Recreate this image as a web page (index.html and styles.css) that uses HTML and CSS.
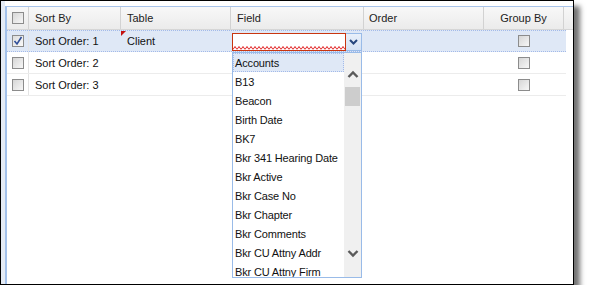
FILE: index.html
```html
<!DOCTYPE html>
<html lang="en">
<head>
    <meta charset="UTF-8">
    <title>Sort Order</title>
    <link rel="stylesheet" href="styles.css">
</head>
<body>
    <div class="frame">
        <div class="grid">
            <div class="head">
                <div class="cell c-check"><span class="checkbox"></span></div>
                <div class="cell c-sort">Sort By</div>
                <div class="cell c-table">Table</div>
                <div class="cell c-field">Field</div>
                <div class="cell c-order">Order</div>
                <div class="cell c-group">Group By</div>
            </div>

            <div class="row selected">
                <div class="cell c-check">
                    <span class="checkbox">
                        <svg width="10" height="10" viewBox="0 0 10 10"><polyline points="1.5,5 4,8 8.5,1" fill="none" stroke="#2f4f9a" stroke-width="1.6"/></svg>
                    </span>
                </div>
                <div class="cell c-sort">Sort Order: 1</div>
                <div class="cell c-table dirty">Client</div>
                <div class="cell c-field"></div>
                <div class="cell c-order"></div>
                <div class="cell c-group"><span class="checkbox"></span></div>
            </div>
            <div class="row">
                <div class="cell c-check"><span class="checkbox"></span></div>
                <div class="cell c-sort">Sort Order: 2</div>
                <div class="cell c-table"></div>
                <div class="cell c-field"></div>
                <div class="cell c-order"></div>
                <div class="cell c-group"><span class="checkbox"></span></div>
            </div>
            <div class="row">
                <div class="cell c-check"><span class="checkbox"></span></div>
                <div class="cell c-sort">Sort Order: 3</div>
                <div class="cell c-table"></div>
                <div class="cell c-field"></div>
                <div class="cell c-order"></div>
                <div class="cell c-group"><span class="checkbox"></span></div>
            </div>

            <!-- field combo editor over row 1 -->
            <div class="editor">
                <div class="editor-input">
                    <svg class="squiggle" width="112" height="4">
                        <defs>
                            <pattern id="zig" width="4" height="4" patternUnits="userSpaceOnUse">
                                <polyline points="0,3.5 2,0.5 4,3.5" fill="none" stroke="#e02020" stroke-width="1"/>
                            </pattern>
                        </defs>
                        <rect width="112" height="4" fill="url(#zig)"/>
                    </svg>
                </div>
                <div class="editor-trigger">
                    <svg width="9" height="6" viewBox="0 0 9 6"><polyline points="1,1 4.5,4.5 8,1" fill="none" stroke="#25467e" stroke-width="2"/></svg>
                </div>
            </div>

            <div class="dropdown">
                <div class="list">
                    <div class="item active">Accounts</div>
                    <div class="item">B13</div>
                    <div class="item">Beacon</div>
                    <div class="item">Birth Date</div>
                    <div class="item">BK7</div>
                    <div class="item">Bkr 341 Hearing Date</div>
                    <div class="item">Bkr Active</div>
                    <div class="item">Bkr Case No</div>
                    <div class="item">Bkr Chapter</div>
                    <div class="item">Bkr Comments</div>
                    <div class="item">Bkr CU Attny Addr</div>
                    <div class="item">Bkr CU Attny Firm</div>
                </div>
                <div class="scrollbar">
                    <div class="arrow">
                        <svg width="12" height="8" viewBox="0 0 12 8"><polyline points="1.5,7 6,2.5 10.5,7" fill="none" stroke="#5a5a5a" stroke-width="2.4"/></svg>
                    </div>
                    <div class="thumb"></div>
                    <div class="track"></div>
                    <div class="arrow">
                        <svg width="12" height="8" viewBox="0 0 12 8"><polyline points="1.5,1 6,5.5 10.5,1" fill="none" stroke="#5a5a5a" stroke-width="2.4"/></svg>
                    </div>
                </div>
            </div>
        </div>
    </div>
</body>
</html>
```

FILE: styles.css
```css
body {
    margin: 0;
    background: #fff;
    font-family: "Liberation Sans", Arial, sans-serif;
    font-size: 11px;
    color: #111;
}
.frame {
    width: 574px;
    height: 285px;
    box-sizing: border-box;
    border: 1px solid #000;
    padding: 5px 0 0 4px;
    display: flex;
    flex-direction: column;
    background: linear-gradient(to right, #e4ebf5 4px, #fff 4px);
    box-shadow: 6px 6px 5px rgba(0, 0, 0, 0.55);
}
.grid {
    flex: 1;
    position: relative;
    background: #fff;
    border-top: 1px solid #a8c4ea;
    border-left: 2px solid #a3c1ea;
}

/* header + rows */
.head {
    display: flex;
    height: 23px;
    box-sizing: border-box;
    border-bottom: 1px solid #d6d6d6;
    background: linear-gradient(#f8f8f8, #ebebeb);
}
.row {
    display: flex;
    width: 559px;
    height: 22px;
    box-sizing: border-box;
    border-bottom: 1px solid #ececec;
}
.row.selected {
    background: #dfe8f6;
    border-top: 1px dotted #a3bae9;
    border-bottom: 1px dotted #a3bae9;
}
.cell {
    display: flex;
    align-items: center;
    box-sizing: border-box;
    padding-left: 6px;
    white-space: nowrap;
    position: relative;
}
.head .cell {
    border-right: 1px solid #d2d2d2;
    color: #222;
}
.c-check { width: 22px; padding: 0; justify-content: center; border-right: 1px solid #e4e4e4; }
.c-sort { width: 92px; }
.c-table { width: 110px; }
.c-field { width: 133px; }
.c-order { width: 120px; padding-left: 5px; }
.c-group { width: 80px; padding: 0; justify-content: center; }

.checkbox {
    width: 12px;
    height: 12px;
    box-sizing: border-box;
    border: 1px solid #8c8c8c;
    background: linear-gradient(135deg, #d6d6d6, #f7f7f7);
    display: flex;
    align-items: center;
    justify-content: center;
}
.selected .c-check .checkbox {
    background: linear-gradient(135deg, #dcdcdc, #fafafa);
}
.dirty::before {
    content: "";
    position: absolute;
    left: 0;
    top: 0;
    border-top: 5px solid #c41010;
    border-right: 5px solid transparent;
}

/* combo editor */
.editor {
    position: absolute;
    left: 225px;
    top: 26px;
    display: flex;
    height: 18px;
}
.editor-input {
    width: 114px;
    box-sizing: border-box;
    border: 1px solid #c9350f;
    background: #fff;
    display: flex;
    flex-direction: column;
    justify-content: flex-end;
}
.squiggle {
    display: block;
}
.editor-trigger {
    width: 16px;
    box-sizing: border-box;
    border: 1px solid #99bbe8;
    border-left: none;
    background: linear-gradient(#e9f0fa, #d3e1f4);
    display: flex;
    align-items: center;
    justify-content: center;
}

/* dropdown list */
.dropdown {
    position: absolute;
    left: 225px;
    top: 45px;
    width: 130px;
    height: 226px;
    box-sizing: border-box;
    border: 1px solid #99bbe8;
    background: #fff;
    display: flex;
}
.list {
    flex: 1;
    overflow: hidden;
}
.item {
    height: 19px;
    line-height: 20px;
    padding-left: 2px;
    box-sizing: border-box;
    white-space: nowrap;
    letter-spacing: -0.15px;
    color: #111;
}
.item.active {
    background: #dfe8f6;
    border: 1px dotted #a3bae9;
    line-height: 18px;
    padding-left: 1px;
}
.scrollbar {
    width: 17px;
    background: #f0f0f0;
    display: flex;
    flex-direction: column;
    padding: 13px 0 15px;
    box-sizing: border-box;
}
.arrow {
    height: 16px;
    display: flex;
    align-items: center;
    justify-content: center;
}
.thumb {
    margin: 5px 1px 0;
    height: 19px;
    background: #cdcdcd;
}
.track {
    flex: 1;
}
```
